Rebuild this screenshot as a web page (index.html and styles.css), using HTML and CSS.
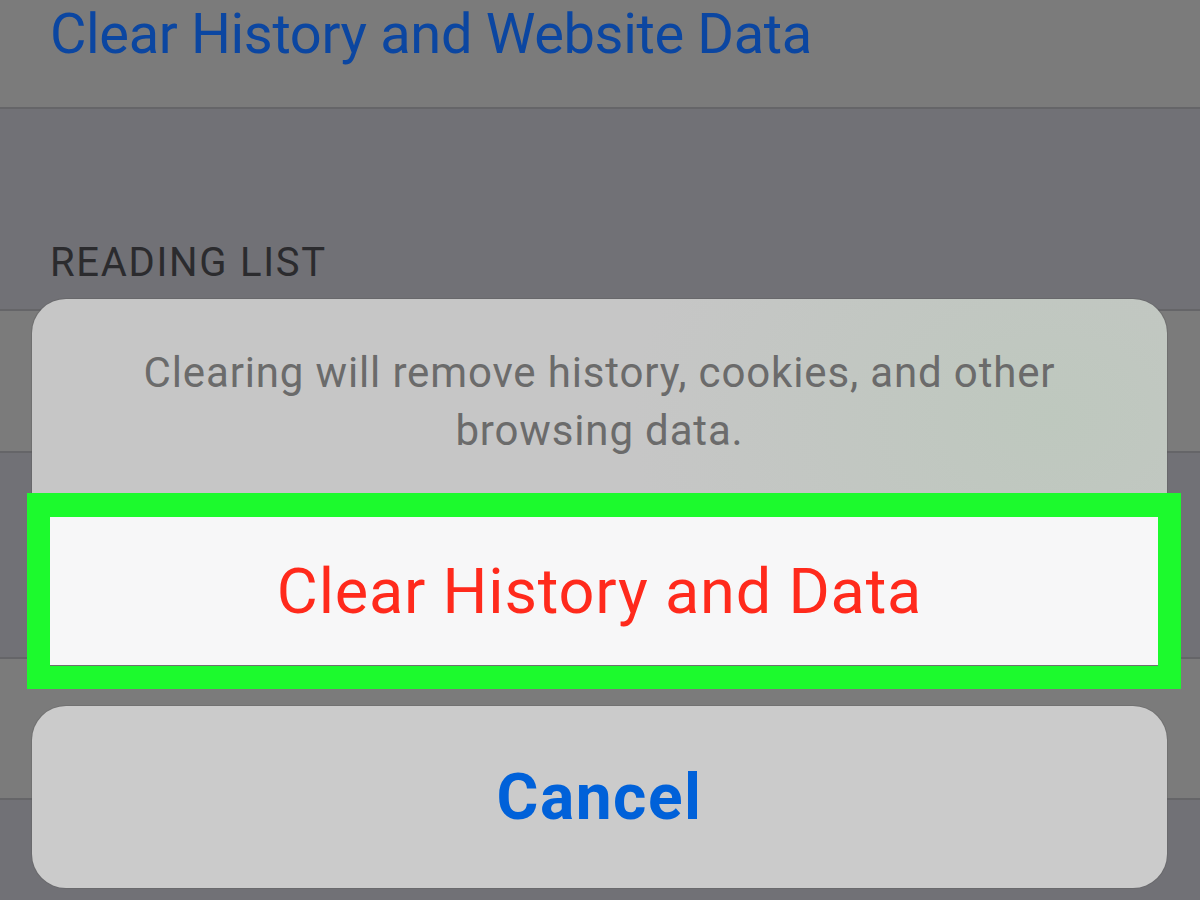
FILE: index.html
```html
<!DOCTYPE html>
<html>
<head>
<meta charset="utf-8">
<link rel="stylesheet" href="styles.css">
</head>
<body>
<div class="screen">
  <div class="cell cell-top"><span class="link">Clear History and Website Data</span></div>
  <div class="gap gap-header"><span class="header">READING LIST</span></div>
  <div class="cell cell-a"></div>
  <div class="gap gap-mid"></div>
  <div class="cell cell-b"></div>
  <div class="gap gap-bottom"></div>

  <div class="sheet">
    <div class="group">
      <div class="message">Clearing will remove history, cookies, and other<br>browsing data.</div>
      <div class="action destructive">Clear History and Data</div>
    </div>
    <div class="action cancel">Cancel</div>
  </div>
  <div class="highlight"></div>
</div>
</body>
</html>
```
FILE: styles.css
```css
html, body {
  margin: 0;
  padding: 0;
}
body {
  width: 1200px;
  height: 900px;
  overflow: hidden;
  font-family: Roboto, "Liberation Sans", sans-serif;
}
.screen {
  position: relative;
  width: 1200px;
  height: 900px;
  overflow: hidden;
  display: flex;
  flex-direction: column;
  background: #717176;
}
.cell {
  background: #7b7b7b;
  border-bottom: 2px solid #656568;
  flex: none;
}
.cell-top {
  height: 109px;
  padding-left: 50px;
  box-sizing: border-box;
  display: flex;
  align-items: flex-start;
}
.link {
  color: #0b46a1;
  font-size: 56px;
  line-height: 56px;
  margin-top: 6px;
  letter-spacing: -0.35px;
}
.gap {
  flex: none;
  border-bottom: 2px solid #656568;
}
.gap-header {
  height: 202px;
  box-sizing: border-box;
  padding-left: 50px;
  display: flex;
  align-items: flex-end;
}
.header {
  color: #2b2b2e;
  font-size: 40px;
  line-height: 40px;
  margin-bottom: 26px;
  letter-spacing: 1.7px;
}
.cell-a { height: 140px; }
.gap-mid { height: 204px; }
.cell-b { height: 139px; }
.gap-bottom { flex: 1; border-bottom: none; }

.sheet {
  position: absolute;
  left: 32px;
  top: 299px;
  width: 1135px;
  display: flex;
  flex-direction: column;
  gap: 41px;
}
.group {
  border-radius: 34px 34px 0 0;
  overflow: hidden;
  display: flex;
  flex-direction: column;
  background: radial-gradient(ellipse 420px 320px at 1020px 120px, #bec8be 0%, rgba(198,198,198,0) 100%), #c6c6c6;
  box-shadow: 0 0 0 1px rgba(90,90,90,0.35);
}
.message {
  height: 218px;
  box-sizing: border-box;
  padding-top: 45px;
  text-align: center;
  color: #6b6b6b;
  font-size: 42px;
  line-height: 58px;
  letter-spacing: 0.85px;
}
.action {
  display: flex;
  align-items: center;
  justify-content: center;
  font-size: 63px;
}
.destructive {
  height: 148px;
  background: #f7f7f8;
  color: #ff2a1c;
  letter-spacing: 0.8px;
}
.cancel {
  height: 182px;
  border-radius: 34px;
  background: #cbcbcb;
  color: #0061d9;
  font-weight: 700;
  font-size: 64px;
  letter-spacing: 1.5px;
  box-shadow: 0 0 0 1px rgba(90,90,90,0.3);
}
.highlight {
  position: absolute;
  left: 27px;
  top: 493px;
  width: 1154px;
  height: 196px;
  box-sizing: border-box;
  border: 23px solid #1cfa2d;
  border-top-width: 24px;
}
```
